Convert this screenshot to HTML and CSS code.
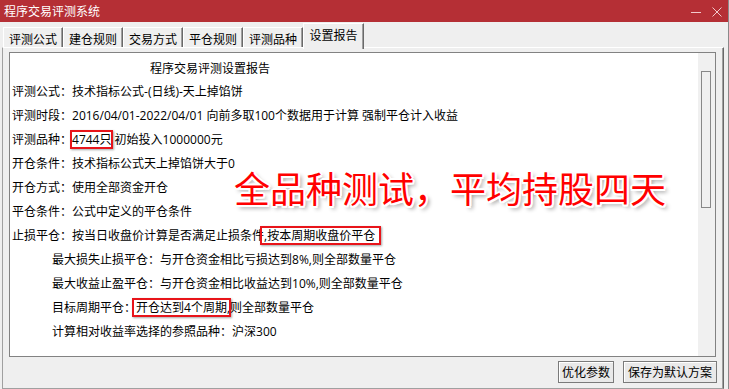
FILE: index.html
```html
<!DOCTYPE html>
<html lang="zh-CN">
<head>
<meta charset="utf-8">
<link rel="stylesheet" href="styles.css">
</head>
<body>
<div class="window">
  <div class="titlebar">
    <span class="title">程序交易评测系统</span>
    <div class="controls">
      <svg width="12" height="12" viewBox="0 0 12 12"><path d="M1 6.5H11" stroke="#f2c9cb" stroke-width="1"/></svg>
      <svg width="12" height="12" viewBox="0 0 12 12"><path d="M1.5 1.5L10.5 10.5M10.5 1.5L1.5 10.5" stroke="#f2c9cb" stroke-width="1"/></svg>
    </div>
  </div>
  <div class="tabs">
    <div class="tab">评测公式</div>
    <div class="tab">建仓规则</div>
    <div class="tab">交易方式</div>
    <div class="tab">平仓规则</div>
    <div class="tab">评测品种</div>
    <div class="tab active">设置报告</div>
  </div>
  <div class="page">
    <div class="report">
      <div class="text">
        <div class="heading">程序交易评测设置报告</div>
        <div class="line">评测公式<span class="c">：</span>技术指标公式-(日线)-天上掉馅饼</div>
        <div class="line">评测时段<span class="c">：</span>2016/04/01-2022/04/01 向前多取100个数据用于计算 强制平仓计入收益</div>
        <div class="line">评测品种<span class="c">：</span><span class="mark m1">4744只</span> 初始投入1000000元</div>
        <div class="line">开仓条件<span class="c">：</span>技术指标公式天上掉馅饼大于0</div>
        <div class="line">开仓方式<span class="c">：</span>使用全部资金开仓</div>
        <div class="line">平仓条件<span class="c">：</span>公式中定义的平仓条件</div>
        <div class="line">止损平仓<span class="c">：</span>按当日收盘价计算是否满足止损条件<span class="mark m2">,按本周期收盘价平仓</span></div>
        <div class="line sub">最大损失止损平仓<span class="c">：</span>与开仓资金相比亏损达到8%,则全部数量平仓</div>
        <div class="line sub">最大收益止盈平仓<span class="c">：</span>与开仓资金相比收益达到10%,则全部数量平仓</div>
        <div class="line sub">目标周期平仓<span class="c">：</span><span class="mark m3">开仓达到4个周期,</span>则全部数量平仓</div>
        <div class="line sub">计算相对收益率选择的参照品种<span class="c">：</span>沪深300</div>
        <div class="banner">全品种测试，平均持股四天</div>
      </div>
      <div class="scrollbar"><div class="thumb"></div></div>
    </div>
    <div class="buttons">
      <button class="btn">优化参数</button>
      <button class="btn">保存为默认方案</button>
    </div>
  </div>
</div>
</body>
</html>
```

FILE: styles.css
```css
* { box-sizing: border-box; }
html, body { margin: 0; padding: 0; }
body {
  width: 729px;
  height: 389px;
  overflow: hidden;
  background: #efefef;
  font-family: "Noto Sans CJK SC", "Microsoft YaHei", sans-serif;
  font-size: 12px;
  color: #000;
}
.window {
  width: 729px;
  height: 389px;
  display: flex;
  flex-direction: column;
  border-right: 1px solid #8a8a8a;
}
.titlebar {
  height: 22px;
  background: #b52f35;
  color: #fff;
  display: flex;
  align-items: center;
  justify-content: space-between;
  padding: 0 5px 0 4px;
  flex: none;
}
.title { font-size: 12px; line-height: 22px; }
.controls { display: flex; gap: 9px; align-items: center; padding-top: 1px; }
.controls svg { display: block; }

.tabs {
  height: 25px;
  display: flex;
  align-items: flex-end;
  padding-left: 3px;
  flex: none;
}
.tab {
  width: 60px;
  height: 21px;
  line-height: 19px;
  text-align: center;
  border-top: 1px solid #fff;
  border-left: 1px solid #fff;
  border-right: 1px solid #696969;
  box-shadow: inset -1px 0 0 #a0a0a0;
  background: #efefef;
  margin-bottom: -1px;
  padding-top: 1px;
}
.tab.active {
  width: 61px;
  height: 26px;
  line-height: 21px;
  padding-top: 0;
  position: relative;
  z-index: 2;
  margin-bottom: -2px;
}

.page {
  flex: 1;
  display: flex;
  flex-direction: column;
  margin-left: 2px;
  margin-right: 4px;
  border-top: 1px solid #fff;
  border-left: 1px solid #a0a0a0;
  border-right: 1px solid #696969;
  box-shadow: inset -1px 0 0 #a0a0a0;
  border-bottom: 1px solid #a0a0a0;
  padding: 4px 0 4px 6px;
}
.report {
  width: 707px;
  height: 305px;
  background: #fff;
  border: 1px solid #828282;
  display: flex;
  flex: none;
}
.text {
  flex: 1;
  position: relative;
  padding: 3px 0 0 2px;
}
.heading {
  line-height: 23px;
  padding-left: 138px;
}
.line {
  line-height: 23px;
  white-space: nowrap;
  font-family: "Open Sans", "Noto Sans CJK SC", sans-serif;
}
.c { font-family: "Noto Sans CJK TC", sans-serif; }
.line.sub { padding-left: 40px; }
.mark { position: relative; }
.mark::after {
  content: "";
  position: absolute;
  top: -1px;
  bottom: -1px;
  left: -2px;
  right: -2px;
  border: 2px solid #e8141a;
  box-shadow: 1px 1px 2px rgba(0, 0, 0, 0.35);
}
.mark.m2::after { left: -4px; right: -6px; }
.mark.m3::after { left: -4px; right: -1px; }

.banner {
  position: absolute;
  left: 224px;
  top: 112px;
  font-size: 36px;
  line-height: 44px;
  color: #ff0000;
  white-space: nowrap;
  text-shadow:
    -2px 0 0 #fff, 2px 0 0 #fff, 0 -2px 0 #fff, 0 2px 0 #fff,
    -1.5px -1.5px 0 #fff, 1.5px -1.5px 0 #fff, -1.5px 1.5px 0 #fff, 1.5px 1.5px 0 #fff,
    3px 3px 4px rgba(0, 0, 0, 0.45);
}

.scrollbar {
  width: 17px;
  background: #f0f0f0;
  padding-top: 18px;
  padding-left: 3px;
  flex: none;
}
.thumb {
  width: 10px;
  height: 137px;
  border: 1px solid #888;
  background: #f0f0f0;
}

.buttons {
  display: flex;
  justify-content: flex-end;
  gap: 9px;
  margin-top: 4px;
  padding-right: 6px;
}
.btn {
  font-family: inherit;
  font-size: 12px;
  height: 22px;
  line-height: 18px;
  padding: 0 3px;
  background: #e9e9e9;
  color: #000;
  border: 1px solid #7a7a7a;
  box-shadow: inset 1px 1px 0 #fff;
  border-radius: 0;
  margin: 0;
}
.btn:last-child { padding: 0 4px; }
```
